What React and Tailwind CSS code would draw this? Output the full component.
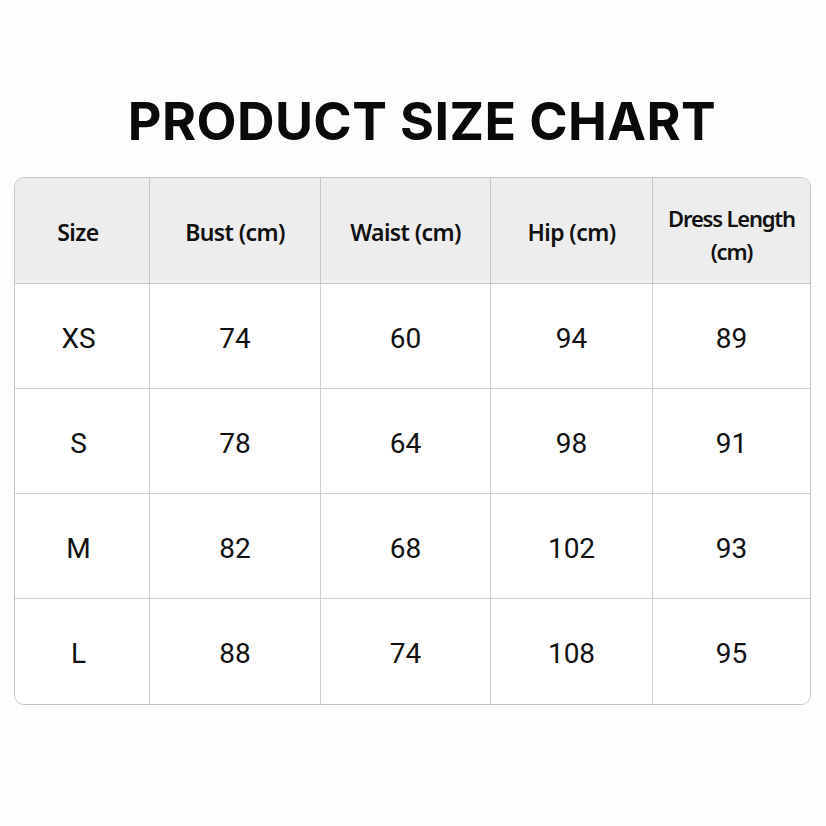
const headers = ['Size', 'Bust (cm)', 'Waist (cm)', 'Hip (cm)', 'Dress Length (cm)'];

const rows = [
  ['XS', '74', '60', '94', '89'],
  ['S', '78', '64', '98', '91'],
  ['M', '82', '68', '102', '93'],
  ['L', '88', '74', '108', '95'],
];

export default function App() {
  return (
    <div className="min-h-[826px] w-[826px] bg-[#fdfdfd] pt-[92px]">
      {/* Title */}
      <h1 className="pl-[18px] text-center font-['Inter',sans-serif] text-[52px] font-bold leading-[60px] tracking-[0.4px] text-[#0a0a0a]">
        PRODUCT SIZE CHART
      </h1>

      {/* Table */}
      <div className="ml-[14px] mt-[25px] w-[797px] overflow-hidden rounded-[10px] border border-[#c4c4c4]">
        <div className="grid grid-cols-[135px_171px_170px_162px_157px]">
          {headers.map((h, i) => (
            <div
              key={h}
              className={`flex h-[106px] items-center justify-center border-b border-[#c4c4c4] bg-[#ededed] text-center font-['Noto_Sans',sans-serif] text-[23px] font-semibold leading-[33px] tracking-[-0.6px] text-[#111] ${
                i < headers.length - 1 ? 'border-r' : ''
              } ${i === 0 ? 'pr-[8px] pt-[3px]' : 'pt-[3px]'}`}
            >
              {h === 'Dress Length (cm)' ? (
                <span className="pt-[5px] text-[22px] tracking-[-1.2px]">
                  Dress Length
                  <br />
                  (cm)
                </span>
              ) : (
                h
              )}
            </div>
          ))}
          {rows.map((row, r) =>
            row.map((cell, i) => (
              <div
                key={`${r}-${i}`}
                className={`flex h-[105px] items-center justify-center border-[#cfcfcf] bg-white pt-[5px] font-['Roboto',sans-serif] text-[28px] text-[#111] ${
                  i < row.length - 1 ? 'border-r' : ''
                } ${r < rows.length - 1 ? 'border-b' : ''} ${i === 0 ? 'pr-[7px]' : ''}`}
              >
                {cell}
              </div>
            ))
          )}
        </div>
      </div>
    </div>
  );
}
